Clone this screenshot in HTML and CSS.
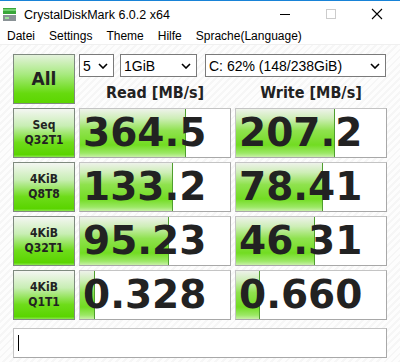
FILE: index.html
```html
<!DOCTYPE html>
<html lang="en">
  <head>
    <meta charset="utf-8">
    <title>CrystalDiskMark 6.0.2 x64</title>
    <link rel="stylesheet" href="styles.css">
  </head>
  <body>
    <div class="titlebar">
      <svg class="app-icon" width="13" height="13" viewBox="0 0 13 13">
        <rect x="0" y="0" width="13" height="6" fill="#3aa63a"/>
        <rect x="0" y="1" width="13" height="2" fill="#6fd06f"/>
        <rect x="0" y="7" width="13" height="6" fill="#8a9296"/>
        <rect x="2" y="9" width="4" height="2" fill="#9be39b"/>
      </svg>
      <span class="title">CrystalDiskMark 6.0.2 x64</span>
      <div class="controls">
        <svg class="ctl" width="46" height="28" viewBox="0 0 46 28"><line x1="18" y1="13.5" x2="28" y2="13.5" stroke="#000" stroke-width="1"/></svg>
        <svg class="ctl" width="46" height="28" viewBox="0 0 46 28"><rect x="18.5" y="8.5" width="9" height="9" fill="none" stroke="#ccc" stroke-width="1"/></svg>
        <svg class="ctl" width="46" height="28" viewBox="0 0 46 28"><path d="M18 8 L28 18 M28 8 L18 18" stroke="#000" stroke-width="1.1"/></svg>
      </div>
    </div>
    <div class="menubar">
      <span class="menu-item">Datei</span>
      <span class="menu-item">Settings</span>
      <span class="menu-item">Theme</span>
      <span class="menu-item">Hilfe</span>
      <span class="menu-item">Sprache(Language)</span>
    </div>
    <div class="client">
      <div class="bench">
        <div class="label all">All</div>
        <div class="selects">
          <div class="select sel-count">5<svg class="chev" width="10" height="6" viewBox="0 0 10 6"><path d="M1 1 L5 5 L9 1" fill="none" stroke="#000" stroke-width="1.6"/></svg></div>
          <div class="select sel-size">1GiB<svg class="chev" width="10" height="6" viewBox="0 0 10 6"><path d="M1 1 L5 5 L9 1" fill="none" stroke="#000" stroke-width="1.6"/></svg></div>
          <div class="select sel-drive">C: 62% (148/238GiB)<svg class="chev" width="10" height="6" viewBox="0 0 10 6"><path d="M1 1 L5 5 L9 1" fill="none" stroke="#000" stroke-width="1.6"/></svg></div>
        </div>
        <div class="head">Read [MB/s]</div>
        <div class="head">Write [MB/s]</div>

        <div class="label">Seq<br>Q32T1</div>
        <div class="cell"><div class="fill" style="width: 106px"></div><span class="val">364.5</span></div>
        <div class="cell"><div class="fill" style="width: 99px"></div><span class="val">207.2</span></div>

        <div class="label">4KiB<br>Q8T8</div>
        <div class="cell"><div class="fill" style="width: 93px"></div><span class="val">133.2</span></div>
        <div class="cell"><div class="fill" style="width: 87px"></div><span class="val">78.41</span></div>

        <div class="label">4KiB<br>Q32T1</div>
        <div class="cell"><div class="fill" style="width: 89px"></div><span class="val">95.23</span></div>
        <div class="cell"><div class="fill" style="width: 79px"></div><span class="val">46.31</span></div>

        <div class="label">4KiB<br>Q1T1</div>
        <div class="cell"><div class="fill" style="width: 15px"></div><span class="val">0.328</span></div>
        <div class="cell"><div class="fill" style="width: 24px"></div><span class="val">0.660</span></div>
      </div>
      <div class="comment"><span class="caret"></span></div>
    </div>
  </body>
</html>
```
FILE: styles.css
```css
* {
  box-sizing: border-box
}

body {
  margin: 0;
  padding: 0;
  width: 400px;
  height: 362px;
  overflow: hidden;
  font-family: 'Liberation Sans', Arial, sans-serif;
  color: #000;
  background: #fff
}

.titlebar {
  height: 28px;
  border-top: 1px solid #1883d7;
  display: flex;
  align-items: center;
  background: #fff
}

.app-icon {
  margin-left: 3px;
  margin-right: 8px
}

.title {
  font-size: 12.5px
}

.controls {
  margin-left: auto;
  display: flex
}

.ctl {
  display: block
}

.menubar {
  height: 17px;
  display: flex;
  align-items: center;
  background: #fff;
  border-bottom: 1px solid #f0f0f0;
  font-size: 12px
}

.menu-item {
  padding: 0 7px
}

.client {
  height: 317px;
  padding: 9px 13px 0 13px;
  background: repeating-linear-gradient(135deg, #f6f6f6 0 2px, #fdfdfd 2px 5px)
}

.bench {
  display: grid;
  grid-template-columns: 62px 152px 152px;
  grid-template-rows: 23px 23px 50px 50px 50px 50px;
  gap: 4px
}

.label {
  border: 1px solid #7f8a7f;
  background: linear-gradient(#f4f6f2 0%, #c8eeb4 35%, #6edc1a 70%, #5ad400 95%, #8ce650 100%);
  display: flex;
  align-items: center;
  justify-content: center;
  text-align: center;
  font-family: 'DejaVu Sans', Verdana, sans-serif;
  font-stretch: condensed;
  font-weight: bold;
  font-size: 12px;
  line-height: 15px;
  color: #222
}

.label.all {
  grid-row: span 2;
  font-size: 17px;
  font-stretch: normal;
  background: linear-gradient(#e4f2dc 0%, #a8ea80 40%, #66da0e 80%, #5cd600 100%)
}

.selects {
  grid-column: span 2;
  display: flex
}

.select {
  height: 23px;
  border: 1px solid #7a7a7a;
  background: #fff;
  display: flex;
  align-items: center;
  padding-left: 3px;
  padding-right: 5px;
  font-size: 14px
}

.chev {
  margin-left: auto
}

.sel-count {
  width: 35px
}

.sel-size {
  width: 77px;
  margin-left: 6px
}

.sel-drive {
  width: 181px;
  margin-left: 8px
}

.head {
  text-align: center;
  font-family: 'DejaVu Sans', Verdana, sans-serif;
  font-stretch: condensed;
  font-weight: bold;
  font-size: 16px;
  line-height: 24px;
  color: #222
}

.cell {
  position: relative;
  border: 1px solid #c4c4c4;
  border-right-color: #a8a8a8;
  border-bottom-color: #a8a8a8;
  background: #fff;
  overflow: hidden
}

.fill {
  position: absolute;
  left: 0;
  top: 0;
  bottom: 0;
  border-right: 1px solid #4f9e2e;
  background: linear-gradient(#eef2ea 0%, #cdeeb6 20%, #8fe24e 45%, #72dc22 75%, #9ce866 92%, #c8f0a8 100%)
}

.val {
  position: relative;
  display: block;
  padding-left: 3px;
  font-family: 'DejaVu Sans', Verdana, sans-serif;
  font-weight: bold;
  font-size: 39px;
  line-height: 48px;
  color: #222
}

.comment {
  margin-top: 8px;
  height: 30px;
  width: 374px;
  border: 1px solid #c4c4c4;
  border-right-color: #a8a8a8;
  border-bottom-color: #a8a8a8;
  background: #fff;
  display: flex;
  align-items: center;
  padding-left: 4px
}

.caret {
  width: 1px;
  height: 16px;
  background: #000
}
```
